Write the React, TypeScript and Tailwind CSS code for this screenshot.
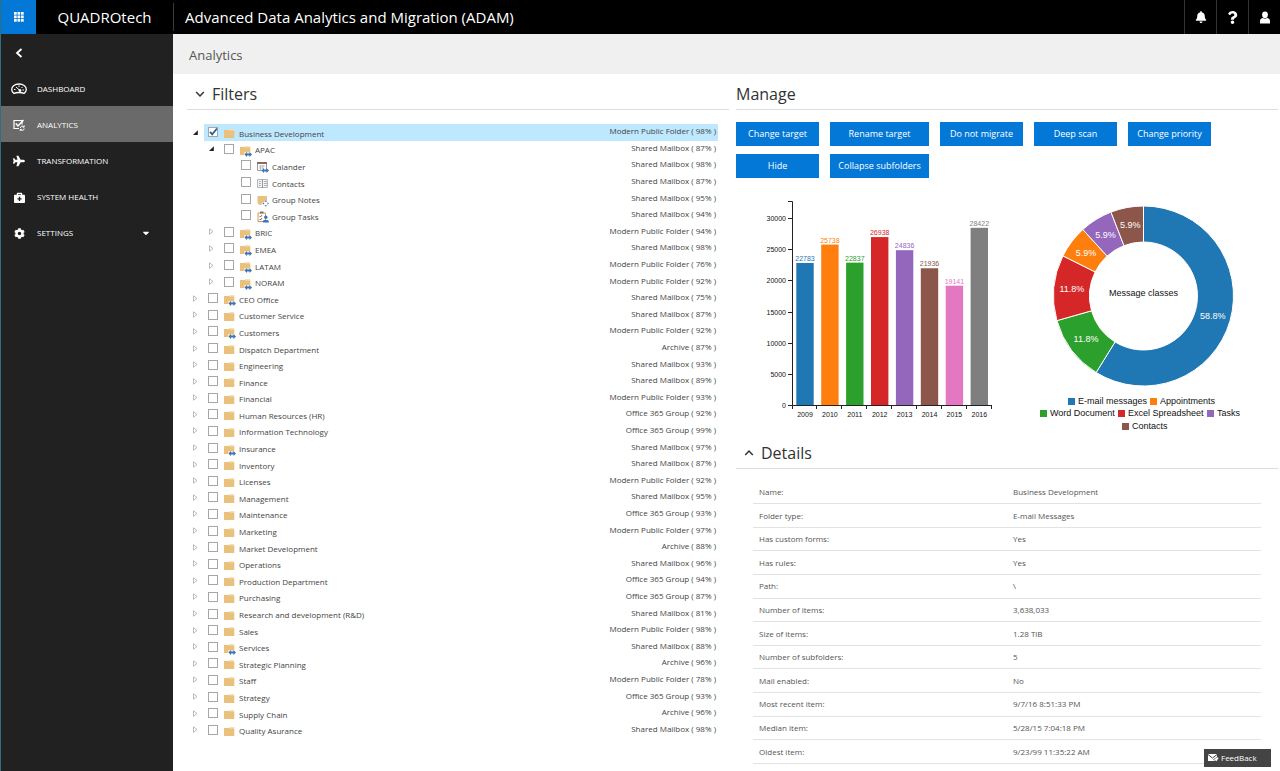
import { FaBell, FaBriefcaseMedical, FaCaretDown, FaCog, FaPlane, FaQuestion } from "react-icons/fa";
import clsx from "clsx";

type IconKind = "folder" | "shared" | "calendar" | "contacts" | "notes" | "tasks";

interface Folder {
  name: string;
  target: string;
  pct: number;
  depth?: number;
  icon?: IconKind;
  open?: boolean;
  leaf?: boolean;
  selected?: boolean;
}

const MPF = "Modern Public Folder";
const SHARED = "Shared Mailbox";
const ARCHIVE = "Archive";
const GROUP = "Office 365 Group";

const folders: Folder[] = [
  { name: "Business Development", target: MPF, pct: 98, open: true, selected: true },
  { name: "APAC", target: SHARED, pct: 87, depth: 1, icon: "shared", open: true },
  { name: "Calander", target: SHARED, pct: 98, depth: 2, icon: "calendar", leaf: true },
  { name: "Contacts", target: SHARED, pct: 87, depth: 2, icon: "contacts", leaf: true },
  { name: "Group Notes", target: SHARED, pct: 95, depth: 2, icon: "notes", leaf: true },
  { name: "Group Tasks", target: SHARED, pct: 94, depth: 2, icon: "tasks", leaf: true },
  { name: "BRIC", target: MPF, pct: 94, depth: 1, icon: "shared" },
  { name: "EMEA", target: SHARED, pct: 98, depth: 1, icon: "shared" },
  { name: "LATAM", target: MPF, pct: 76, depth: 1, icon: "shared" },
  { name: "NORAM", target: MPF, pct: 92, depth: 1, icon: "shared" },
  { name: "CEO Office", target: SHARED, pct: 75, icon: "shared" },
  { name: "Customer Service", target: SHARED, pct: 87 },
  { name: "Customers", target: MPF, pct: 92, icon: "shared" },
  { name: "Dispatch Department", target: ARCHIVE, pct: 87 },
  { name: "Engineering", target: SHARED, pct: 93 },
  { name: "Finance", target: SHARED, pct: 89 },
  { name: "Financial", target: MPF, pct: 93 },
  { name: "Human Resources (HR)", target: GROUP, pct: 92 },
  { name: "Information Technology", target: GROUP, pct: 99 },
  { name: "Insurance", target: SHARED, pct: 97, icon: "shared" },
  { name: "Inventory", target: SHARED, pct: 87 },
  { name: "Licenses", target: MPF, pct: 92 },
  { name: "Management", target: SHARED, pct: 95 },
  { name: "Maintenance", target: GROUP, pct: 93 },
  { name: "Marketing", target: MPF, pct: 97 },
  { name: "Market Development", target: ARCHIVE, pct: 88 },
  { name: "Operations", target: SHARED, pct: 96 },
  { name: "Production Department", target: GROUP, pct: 94 },
  { name: "Purchasing", target: GROUP, pct: 87 },
  { name: "Research and development (R&D)", target: SHARED, pct: 81 },
  { name: "Sales", target: MPF, pct: 98 },
  { name: "Services", target: SHARED, pct: 88, icon: "shared" },
  { name: "Strategic Planning", target: ARCHIVE, pct: 96 },
  { name: "Staff", target: MPF, pct: 78 },
  { name: "Strategy", target: GROUP, pct: 93 },
  { name: "Supply Chain", target: ARCHIVE, pct: 96 },
  { name: "Quality Asurance", target: SHARED, pct: 98 },
];

const details = [
  ["Name:", "Business Development"],
  ["Folder type:", "E-mail Messages"],
  ["Has custom forms:", "Yes"],
  ["Has rules:", "Yes"],
  ["Path:", "\\"],
  ["Number of items:", "3,638,033"],
  ["Size of items:", "1.28 TiB"],
  ["Number of subfolders:", "5"],
  ["Mail enabled:", "No"],
  ["Most recent item:", "9/7/16 8:51:33 PM"],
  ["Median item:", "5/28/15 7:04:18 PM"],
  ["Oldest item:", "9/23/99 11:35:22 AM"],
];

const years = [
  { year: 2009, value: 22783, color: "#1f77b4" },
  { year: 2010, value: 25738, color: "#ff7f0e" },
  { year: 2011, value: 22837, color: "#2ca02c" },
  { year: 2012, value: 26938, color: "#d62728" },
  { year: 2013, value: 24836, color: "#9467bd" },
  { year: 2014, value: 21936, color: "#8c564b" },
  { year: 2015, value: 19141, color: "#e377c2" },
  { year: 2016, value: 28422, color: "#7f7f7f" },
];

const slices = [
  { share: 10, label: "58.8%", color: "#1f77b4" },
  { share: 2, label: "11.8%", color: "#2ca02c" },
  { share: 2, label: "11.8%", color: "#d62728" },
  { share: 1, label: "5.9%", color: "#ff7f0e" },
  { share: 1, label: "5.9%", color: "#9467bd" },
  { share: 1, label: "5.9%", color: "#8c564b" },
];

const legend = [
  { x: 38, y: 211, label: "E-mail messages", color: "#1f77b4" },
  { x: 120, y: 211, label: "Appointments", color: "#ff7f0e" },
  { x: 10, y: 223, label: "Word Document", color: "#2ca02c" },
  { x: 88, y: 223, label: "Excel Spreadsheet", color: "#d62728" },
  { x: 177, y: 223, label: "Tasks", color: "#9467bd" },
  { x: 92, y: 236, label: "Contacts", color: "#8c564b" },
];

/** Folder glyph, or an item glyph for leaves, with the blue target badge */
function ItemIcon({ kind }: { kind: IconKind }) {
  const arrows = <path d="M4.500 10.500 7 8v1.500h2.500V8l2.500 2.500L9.500 13v-1.500H7V13z" fill="#3b74ba" />;
  return (
    <svg viewBox="0 0 12 13" className="h-[13px] w-3 shrink-0">
      {(kind === "folder" || kind === "shared") && (
        <>
          <path d="M5 2.200h5.200V4H5z" fill="#f3d9ab" />
          <path d="M0 3h5l1 .8h4.300V11H0z" fill="#e9c07c" />
        </>
      )}
      {kind === "shared" && (
        <>
          <path d="M4 8h8v5H4z" fill="#fff" opacity=".55" />
          {arrows}
        </>
      )}
      {kind === "calendar" && (
        <>
          <path d="M.5 2.500h9v8h-9z" fill="#fff" stroke="#9a9a9a" />
          <path d="M0 2h10v2H0z" fill="#8a6a60" />
          <path d="M2 6h6M2 8h4M3.500 5v5M6 5v4" stroke="#aaa" strokeWidth=".7" />
          {arrows}
        </>
      )}
      {kind === "contacts" && (
        <>
          <path d="M.5 2.500h10v8H.5z" fill="#f4f4f4" stroke="#b5b5b5" />
          <path d="M5.500 2v9" stroke="#999" />
          <path d="M2 4.500h2M2 6.500h2M2 8.500h2M7 4.500h3M7 6.500h3M7 8.500h3" stroke="#a5b5c0" />
        </>
      )}
      {kind === "notes" && (
        <>
          <path d="M.5 2H10v6.500H6L4 11H2.500L.5 9z" fill="#e9c07c" />
          <path d="M8.800 6.800v5.400M6.100 9.500h5.400" stroke="#fff" strokeWidth="3" />
          <path d="m8.800 6.300 1.300 1.500H7.500zM8.800 12.700 7.500 11.200h2.600zM5.600 9.500l1.500-1.300v2.600zM12 9.500l-1.500 1.300V8.200z" fill="#3b74ba" />
        </>
      )}
      {kind === "tasks" && (
        <>
          <path d="M1 3h7.500v8.500H1z" fill="#fff" stroke="#d9964f" />
          <path d="M3 1.500h3.500v2H3z" fill="#777" />
          <path d="m2.500 6 1 1L5 5M2.500 9l1 1L5 8" stroke="#555" fill="none" strokeWidth=".8" />
          <circle cx="8.800" cy="7.200" r="1.700" fill="#3b74ba" />
          <path d="M5.800 12.500V11c0-1.500 6-1.500 6 0v1.500z" fill="#3b74ba" />
        </>
      )}
    </svg>
  );
}

function TreeRow({ folder }: { folder: Folder }) {
  const { name, target, pct, depth = 0, icon = "folder", open, leaf, selected } = folder;
  return (
    <li className={clsx("flex", depth === 1 && "pl-4", depth === 2 && "pl-[33px]")}>
      {leaf ? (
        <span className="w-4 shrink-0" />
      ) : (
        <button type="button" aria-label={`Toggle ${name}`} className="flex w-4 shrink-0 items-center pl-1">
          <svg viewBox="0 0 7 7" className="size-[7px]">
            {open ? (
              <path d="M5.800 1.200V6H1z" fill="#222" />
            ) : (
              <path d="M1.500 .8 5 3.500 1.500 6.200z" fill="none" stroke="#aaa" strokeWidth=".8" />
            )}
          </svg>
        </button>
      )}
      <label
        className={clsx("flex min-w-0 flex-1 items-center pl-1", selected && "bg-[#bee8fd]")}
      >
        <span className="relative flex size-[10px] shrink-0">
          <input
            type="checkbox"
            defaultChecked={selected}
            className="peer size-[10px] appearance-none border border-[#a6a6a6] bg-white"
          />
          <svg viewBox="0 0 10 10" className="pointer-events-none absolute inset-0 hidden size-[10px] peer-checked:block">
            <path d="M2 4.800 4.200 7.300 9 1.500" fill="none" stroke="#2d5f93" strokeWidth="1.800" />
          </svg>
        </span>
        <span className="flex flex-1 items-center gap-[3px] pt-[3px] pl-[6px]">
          <ItemIcon kind={icon} />
          {name}
        </span>
        <span className="pr-[2px] pb-[2px] text-right">
          {target} ( {pct}% )
        </span>
      </label>
    </li>
  );
}

function BarChart() {
  const base = 215;
  const y = (v: number) => base - (v * 187) / 30000;
  return (
    <svg viewBox="6 0 280 243" className="h-[243px] w-[280px] shrink-0 text-[7px]" role="img" aria-label="Items per year">
      <path d={`M58 11.500h4.500V${base + 0.5}H58`} fill="none" stroke="#222" />
      <path d={`M62.500 ${base + 4}v-3.500H261.500v3.500`} fill="none" stroke="#222" />
      {[0, 5000, 10000, 15000, 20000, 25000, 30000].map((t) => (
        <g key={t}>
          <path d={`M58 ${Math.round(y(t)) + 0.5}h4`} stroke="#222" />
          <text x="56" y={y(t) + 3} textAnchor="end" fill="#111">
            {t}
          </text>
        </g>
      ))}
      {years.map((d, i) => {
        const cx = 75 + i * 24.9;
        return (
          <g key={d.year}>
            <rect x={cx - 8.7} y={y(d.value)} width="17.400" height={base - y(d.value)} fill={d.color} />
            <text x={cx} y={y(d.value) - 2} textAnchor="middle" fill={d.color}>
              {d.value}
            </text>
            <path d={`M${Math.round(cx + 12.4) - 0.5} ${base}v4`} stroke="#222" />
            <text x={cx} y="227" textAnchor="middle" fill="#111">
              {d.year}
            </text>
          </g>
        );
      })}
    </svg>
  );
}

function DonutChart() {
  const cx = 113.5;
  const cy = 106;
  const total = slices.reduce((sum, s) => sum + s.share, 0);
  const at = (turn: number, r: number) =>
    [cx + r * Math.sin(turn * 2 * Math.PI), cy - r * Math.cos(turn * 2 * Math.PI)] as const;
  let start = 0;
  return (
    <svg viewBox="0 0 230 243" className="h-[243px] w-[230px] shrink-0 text-[9px]" role="img" aria-label="Message classes">
      {slices.map((s, i) => {
        const from = start / total;
        start += s.share;
        const to = start / total;
        const large = to - from > 0.5 ? 1 : 0;
        const [x1, y1] = at(from, 90);
        const [x2, y2] = at(to, 90);
        const [x3, y3] = at(to, 54);
        const [x4, y4] = at(from, 54);
        const [lx, ly] = at((from + to) / 2, 72);
        return (
          <g key={i}>
            <path
              d={`M${x1} ${y1}A90 90 0 ${large} 1 ${x2} ${y2}L${x3} ${y3}A54 54 0 ${large} 0 ${x4} ${y4}Z`}
              fill={s.color}
              stroke="#fff"
            />
            <text x={lx} y={ly + 3} textAnchor="middle" fill="#fff">
              {s.label}
            </text>
          </g>
        );
      })}
      <text x={cx} y={cy} textAnchor="middle" fill="#111">
        Message classes
      </text>
      {legend.map((l) => (
        <g key={l.label}>
          <rect x={l.x} y={l.y - 3} width="7" height="7" fill={l.color} />
          <text x={l.x + 10} y={l.y + 3} fill="#111">
            {l.label}
          </text>
        </g>
      ))}
    </svg>
  );
}

const navItems = [
  {
    label: "DASHBOARD",
    icon: (
      <svg viewBox="0 0 16 12" className="w-4" fill="none" stroke="currentColor">
        <path d="M3 10.500C1 9 .7 7.500.7 6.500.7 3 4 1 8 1s7.300 2.200 7.300 5.500c0 1-.3 2.500-2.300 4-1-.7-2.500-1-5-1s-4 .3-5 1z" strokeWidth="1.300" />
        <path d="m5 4 4 3.500M3 6.500h1.500M8 2.500V4M11.500 4l-1 1M11.500 7h1.500" />
        <circle cx="9" cy="7.500" r="1" fill="currentColor" />
      </svg>
    ),
  },
  {
    label: "ANALYTICS",
    active: true,
    icon: (
      <svg viewBox="0 0 12 12" className="w-3" fill="none" stroke="currentColor">
        <path d="M6 9.500H1V1.500h8v4" strokeWidth="1.200" />
        <path d="m2.800 4.500 2.200 2.500 5.500-6" strokeWidth="1.500" />
        <path d="M7.300 9a2 2 0 0 1 3.500-1.200M11.200 9.500a2 2 0 0 1-3.500 1.200M11.200 6.500v1.600H9.600M7.200 12v-1.600h1.600" />
      </svg>
    ),
  },
  { label: "TRANSFORMATION", icon: <FaPlane size={12} /> },
  { label: "SYSTEM HEALTH", icon: <FaBriefcaseMedical size={11} /> },
  { label: "SETTINGS", icon: <FaCog size={11} />, caret: true },
];

function Sidebar() {
  return (
    <nav className="w-[172px] shrink-0 bg-[#212121] text-[8px] text-white">
      <button type="button" aria-label="Collapse menu" className="flex h-9 w-full items-center pt-px pl-[14px]">
        <svg viewBox="0 0 8 10" className="h-[10px] w-2">
          <path d="M6.500 1 2 5l4.500 4" fill="none" stroke="currentColor" strokeWidth="1.800" />
        </svg>
      </button>
      {navItems.map((item) => (
        <a
          key={item.label}
          href="#"
          className={clsx("flex h-9 items-center pt-[2px]", item.active && "bg-[#6a6a6a]")}
        >
          <span className="flex w-9 justify-center">{item.icon}</span>
          {item.label}
          {item.caret && <FaCaretDown size={10} className="mr-[22px] ml-auto" />}
        </a>
      ))}
    </nav>
  );
}

function Header() {
  return (
    <header className="flex h-[34px] items-center bg-black text-white">
      <button type="button" aria-label="Apps" className="flex h-full w-[35px] items-center justify-center bg-[#0478d7]">
        <svg viewBox="0 0 10 10" className="size-[10px]" fill="#fff">
          {[0, 3.5, 7].map((x) => [0, 3.5, 7].map((y) => <rect key={`${x}-${y}`} x={x} y={y} width="2.700" height="2.700" />))}
        </svg>
      </button>
      <span className="w-[137px] text-center text-[15px]">QUADROtech</span>
      <h1 className="flex h-7 flex-1 items-center border-l border-[#3a3a3a] pl-[11px] text-[15px]">
        Advanced Data Analytics and Migration (ADAM)
      </h1>
      <button type="button" aria-label="Notifications" className="flex h-full w-8 items-center justify-center border-l border-[#333]">
        <FaBell size={12} />
      </button>
      <button type="button" aria-label="Help" className="flex h-full w-8 items-center justify-center border-l border-[#333]">
        <FaQuestion size={13} />
      </button>
      <button type="button" aria-label="Account" className="flex h-full w-8 items-center justify-center border-l border-[#333]">
        <svg viewBox="0 0 12 13" className="h-[13px] w-3" fill="#fff">
          <ellipse cx="6" cy="3.800" rx="2.900" ry="3.400" />
          <path d="M1 12.500V10c0-2 1.500-3 3-3 1 1 3 1 4 0 1.500 0 3 1 3 3v2.500z" />
        </svg>
      </button>
    </header>
  );
}

function SectionTitle({ title, chevron }: { title: string; chevron?: "up" | "down" }) {
  return (
    <h2 className="flex h-9 items-center border-b border-[#ddd] pt-[5px] text-base text-[#333]">
      {chevron && (
        <svg viewBox="0 0 10 8" className="mr-[7px] ml-2 h-2 w-[10px]" fill="none" stroke="#333" strokeWidth="1.500">
          {chevron === "down" ? <path d="m1.200 2 3.800 4 3.800-4" /> : <path d="m1.200 6 3.800-4 3.800 4" />}
        </svg>
      )}
      {title}
    </h2>
  );
}

function ActionButton({ label, wide }: { label: string; wide?: boolean }) {
  return (
    <button
      type="button"
      className={clsx("h-6 bg-[#0478d7] text-[9px] whitespace-nowrap text-white", wide ? "w-[99px]" : "w-[83px]")}
    >
      {label}
    </button>
  );
}

export default function App() {
  return (
    <div className="flex min-h-screen flex-col border-l border-[#2f6f80] bg-white font-['Open_Sans',sans-serif] text-[#444]">
      <Header />
      <div className="flex flex-1">
        <Sidebar />
        <main className="min-w-0 flex-1">
          <div className="flex h-10 items-center bg-[#f0f0f0] pt-[3px] pl-4 text-[13px] text-[#555]">Analytics</div>
          <div className="grid grid-cols-2 gap-[7px] pr-[2px] pl-[14px]">
            <section>
              <SectionTitle title="Filters" chevron="down" />
              <ul className="mt-[14px] mr-[11px] ml-[1px] grid h-[614px] auto-rows-fr text-[8px] leading-[12px]">
                {folders.map((f) => (
                  <TreeRow key={f.name} folder={f} />
                ))}
              </ul>
            </section>
            <section>
              <SectionTitle title="Manage" />
              <div className="mt-3 flex flex-wrap gap-x-[11px] gap-y-2">
                <ActionButton label="Change target" />
                <ActionButton label="Rename target" wide />
                <ActionButton label="Do not migrate" />
                <ActionButton label="Deep scan" />
                <ActionButton label="Change priority" />
                <ActionButton label="Hide" />
                <ActionButton label="Collapse subfolders" wide />
              </div>
              <div className="mt-3 flex justify-between pr-[18px] font-['Liberation_Sans',Arial,sans-serif]">
                <BarChart />
                <DonutChart />
              </div>
              <SectionTitle title="Details" chevron="up" />
              <div className="px-[17px] pt-3">
                <table className="h-[283px] w-full table-fixed text-[8px] leading-[12px] text-[#555]">
                  <tbody>
                    {details.map(([label, value]) => (
                      <tr key={label} className="border-b border-[#e2e2e2]">
                        <th scope="row" className="px-[6px] text-left font-normal">
                          {label}
                        </th>
                        <td className="px-[6px]">{value}</td>
                      </tr>
                    ))}
                  </tbody>
                </table>
              </div>
            </section>
          </div>
        </main>
      </div>
      <button
        type="button"
        className="fixed right-[9px] bottom-1 flex h-[18px] w-[67px] items-center gap-[2px] bg-[#444] pl-1 text-[8px] text-white"
      >
        <svg viewBox="0 0 11 8" className="h-2 w-[11px]">
          <path d="M0 0h9v7H0z" fill="#fff" />
          <path d="m0 .5 4.500 3.500L9 .5" fill="none" stroke="#444" />
          <path d="m5.500 5.500 3 2L11 4 9.500 3z" fill="#fff" stroke="#444" strokeWidth=".6" />
        </svg>
        FeedBack
      </button>
    </div>
  );
}
